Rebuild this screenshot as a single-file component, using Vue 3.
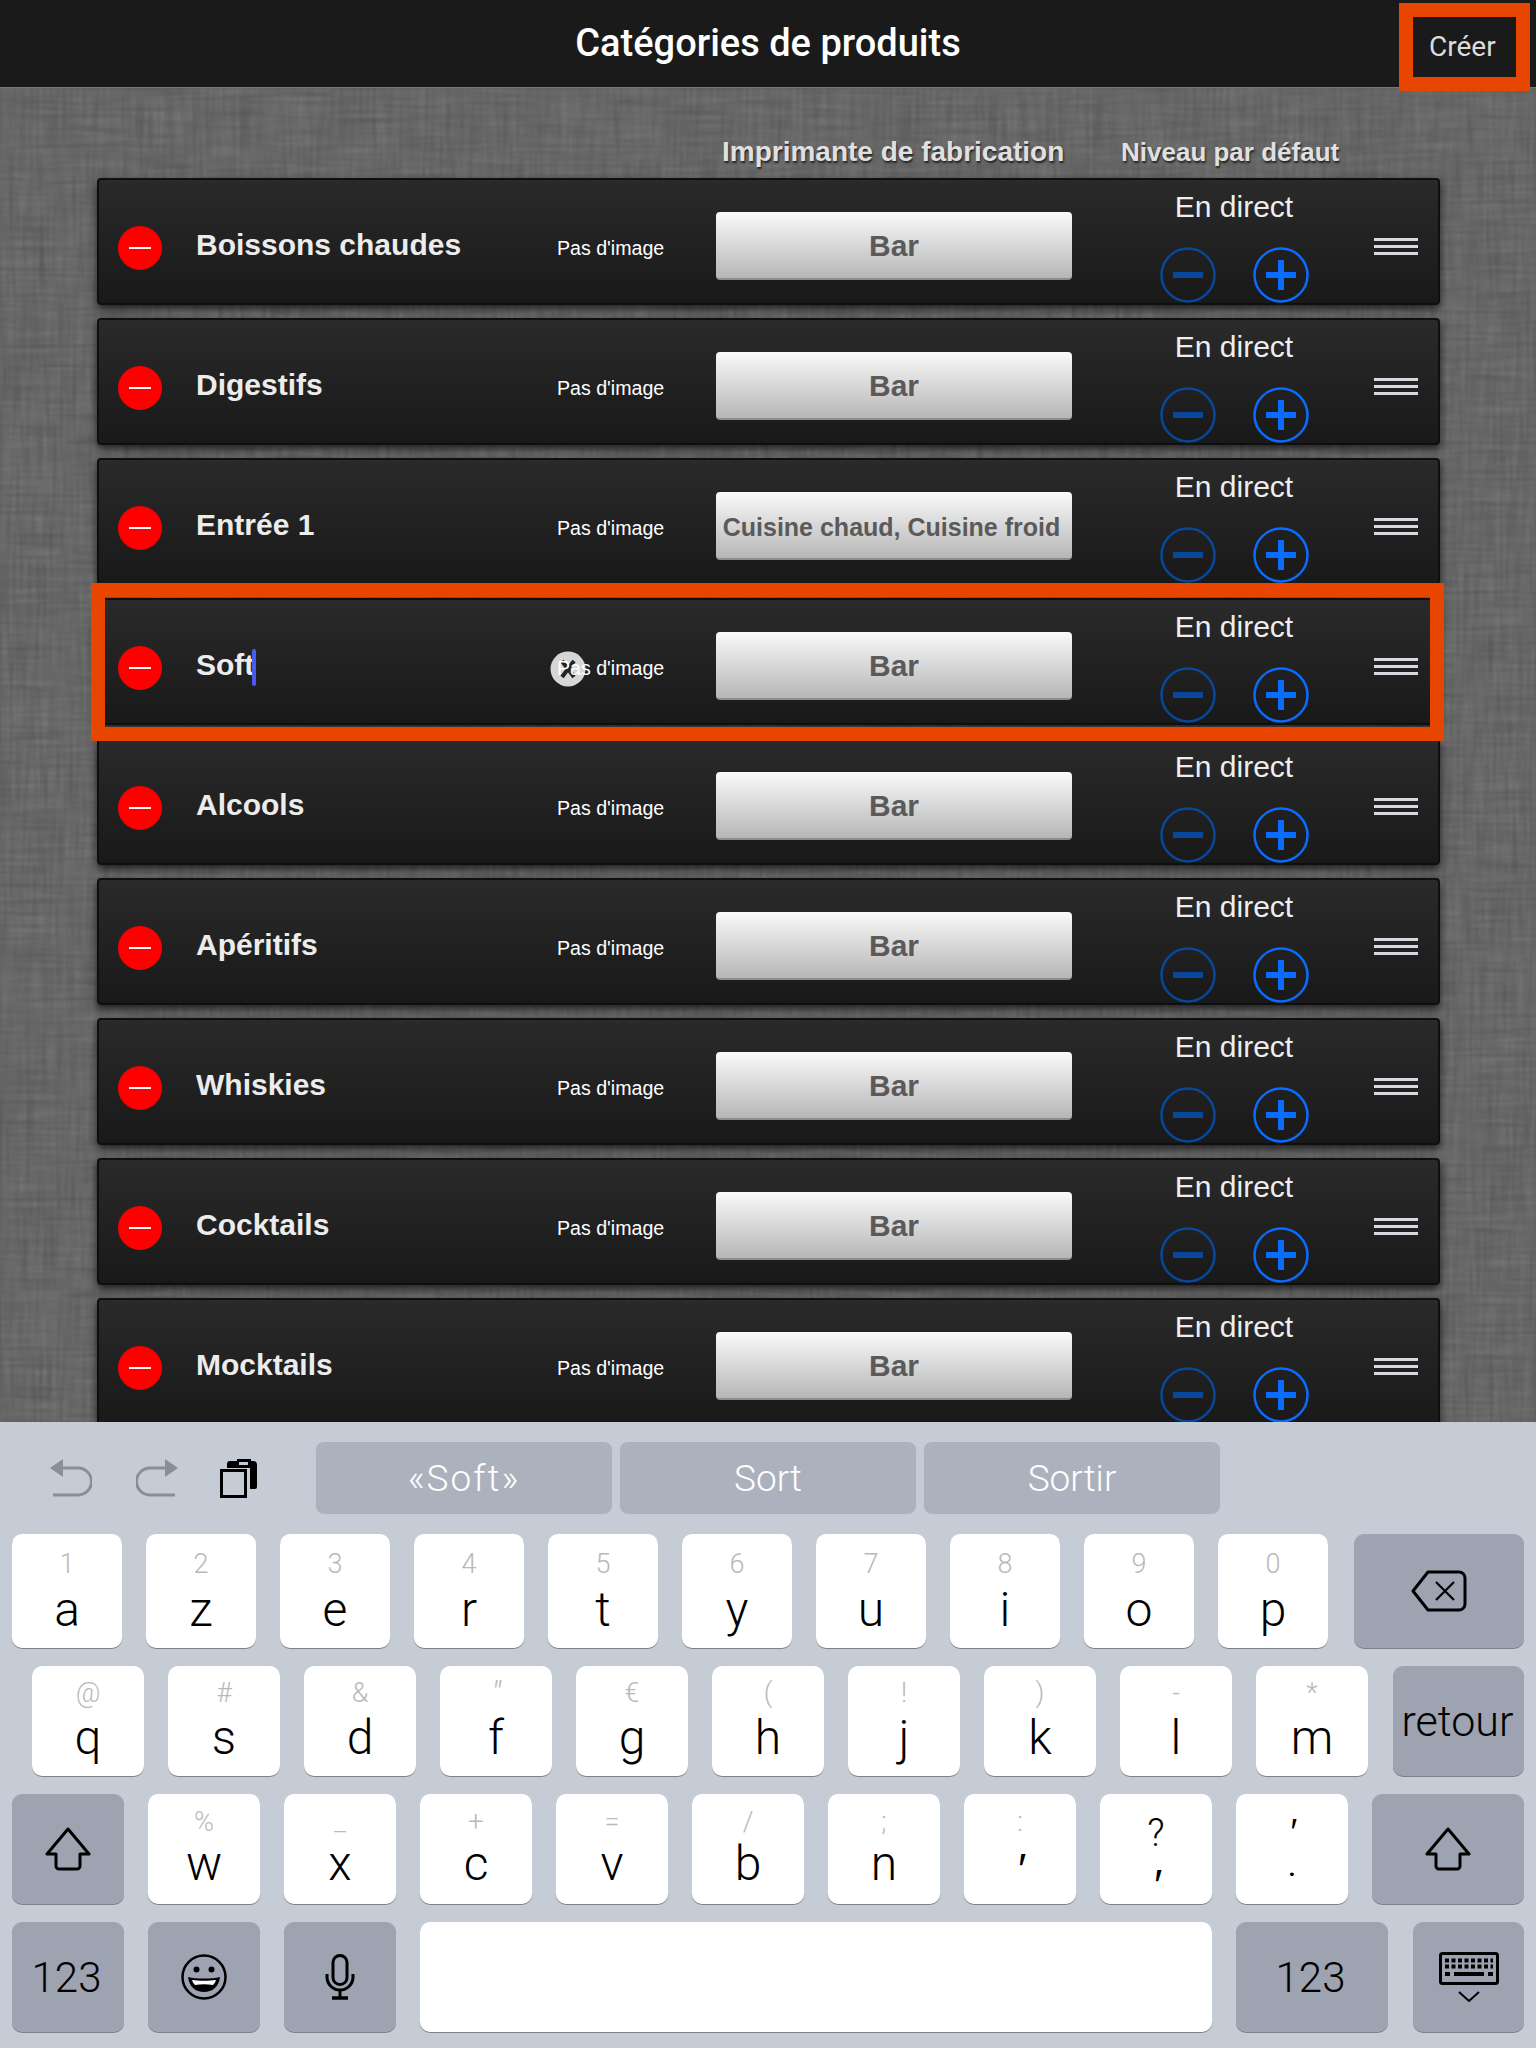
<script setup>
const rows = [
  { name: 'Boissons chaudes', printer: 'Bar' },
  { name: 'Digestifs', printer: 'Bar' },
  { name: 'Entrée 1', printer: 'Cuisine chaud, Cuisine froid', long: true },
  { name: 'Soft', printer: 'Bar', active: true },
  { name: 'Alcools', printer: 'Bar' },
  { name: 'Apéritifs', printer: 'Bar' },
  { name: 'Whiskies', printer: 'Bar' },
  { name: 'Cocktails', printer: 'Bar' },
  { name: 'Mocktails', printer: 'Bar' }
]
const row1 = [['1','a'],['2','z'],['3','e'],['4','r'],['5','t'],['6','y'],['7','u'],['8','i'],['9','o'],['0','p']]
const row2 = [['@','q'],['#','s'],['&','d'],['″','f'],['€','g'],['(','h'],['!','j'],[')','k'],['-','l'],['*','m']]
const row3 = [['%','w'],['_','x'],['+','c'],['=','v'],['/','b'],[';','n']]
</script>

<template>
  <div class="page">
    <header class="topbar">
      <h1 class="title">Catégories de produits</h1>
      <span class="create">Créer</span>
      <span class="create-mark"></span>
    </header>

    <main class="board">
      <svg class="linen" width="1536" height="1334" aria-hidden="true">
        <filter id="weave" x="0" y="0" width="100%" height="100%" color-interpolation-filters="sRGB">
          <feTurbulence type="fractalNoise" baseFrequency="0.015 0.3" numOctaves="3" seed="4" result="h" />
          <feTurbulence type="fractalNoise" baseFrequency="0.3 0.015" numOctaves="3" seed="9" result="v" />
          <feBlend in="h" in2="v" mode="multiply" />
          <feColorMatrix type="matrix" values="0.22 0 0 0 0.31  0.22 0 0 0 0.31  0.22 0 0 0 0.31  0 0 0 0 1" />
          <feGaussianBlur stdDeviation="0.8" />
        </filter>
        <rect width="1536" height="1334" filter="url(#weave)" />
      </svg>

      <div class="labels">
        <span class="label-printer">Imprimante de fabrication</span>
        <span class="label-level">Niveau par défaut</span>
      </div>

      <div class="list">
        <section v-for="row in rows" :key="row.name" class="row" :class="{ active: row.active }">
          <span class="remove"><i></i></span>
          <span class="name">{{ row.name }}<i v-if="row.active" class="caret"></i></span>
          <span class="noimg">
            <svg v-if="row.active" class="clear" width="36" height="36" viewBox="0 0 36 36">
              <circle cx="18" cy="18" r="17.5" fill="#d6d6d6" />
              <path d="M12 10 24 26M24 10 12 26" stroke="#222" stroke-width="4" />
            </svg>
            <span class="noimg-text">Pas d'image</span>
          </span>
          <span class="printer" :class="{ long: row.long }">{{ row.printer }}</span>
          <div class="level">
            <span class="level-name">En direct</span>
            <div class="steppers">
              <svg width="56" height="56" viewBox="0 0 56 56">
                <circle cx="28" cy="28" r="26.5" fill="none" stroke="#07479c" stroke-width="2.5" />
                <path d="M13 28h30" stroke="#07479c" stroke-width="6" />
              </svg>
              <svg width="56" height="56" viewBox="0 0 56 56">
                <circle cx="28" cy="28" r="26.5" fill="none" stroke="#0a6bff" stroke-width="2.5" />
                <path d="M13 28h30M28 13v30" stroke="#0a6bff" stroke-width="6" />
              </svg>
            </div>
          </div>
          <span class="grip"><i></i><i></i><i></i></span>
        </section>
      </div>
    </main>

    <div class="keyboard">
      <div class="tools">
        <div class="tool-icons">
          <svg width="42" height="38" viewBox="0 0 42 38">
            <path d="M0 9 13 0v18z" fill="#8a8f96" />
            <path d="M12 9h16a13.5 13.5 0 0 1 0 27H3" fill="none" stroke="#8a8f96" stroke-width="3" />
          </svg>
          <svg width="42" height="38" viewBox="0 0 42 38">
            <path d="M42 9 29 0v18z" fill="#8a8f96" />
            <path d="M30 9H14a13.5 13.5 0 0 0 0 27h25" fill="none" stroke="#8a8f96" stroke-width="3" />
          </svg>
          <svg width="37" height="40" viewBox="0 0 37 40">
            <path d="M7 10V6a3 3 0 0 1 3-3h7V1h14v2h2a4 4 0 0 1 4 4v22a2 2 0 0 1-2 2h-5V10z" fill="#000" />
            <rect x="18.5" y="3.5" width="10" height="4" fill="#c6ccd5" stroke="#000" stroke-width="1" />
            <rect x="1.5" y="12.5" width="24" height="26" fill="#c6ccd5" stroke="#000" stroke-width="3" />
          </svg>
        </div>
        <div class="suggestions">
          <span class="sugg quoted">«Soft»</span>
          <span class="sugg">Sort</span>
          <span class="sugg">Sortir</span>
        </div>
      </div>

      <div class="krow first">
        <span v-for="k in row1" :key="k[1]" class="key"><small>{{ k[0] }}</small><b>{{ k[1] }}</b></span>
        <span class="key dark del">
          <svg width="56" height="42" viewBox="0 0 56 42">
            <path d="M17 2h31a6 6 0 0 1 6 6v26a6 6 0 0 1-6 6H17L2 21z" fill="none" stroke="#000" stroke-width="3" stroke-linejoin="round" />
            <path d="M25 12l18 18M43 12 25 30" stroke="#000" stroke-width="2.2" />
          </svg>
        </span>
      </div>

      <div class="krow second">
        <span v-for="k in row2" :key="k[1]" class="key wide"><small :class="{ slant: k[1] === 'f' }">{{ k[0] }}</small><b>{{ k[1] }}</b></span>
        <span class="key dark ret">retour</span>
      </div>

      <div class="krow third">
        <span class="key dark wide">
          <svg width="46" height="44" viewBox="0 0 46 44">
            <path d="M23 2 44 27h-9v12a3 3 0 0 1-3 3H14a3 3 0 0 1-3-3V27H2z" fill="none" stroke="#000" stroke-width="3" stroke-linejoin="round" />
          </svg>
        </span>
        <span v-for="k in row3" :key="k[1]" class="key wide"><small>{{ k[0] }}</small><b>{{ k[1] }}</b></span>
        <span class="key wide"><small>:</small><em class="tick tick-comma">′</em></span>
        <span class="key wide stack"><em class="mark">?</em><em class="tick tick-low">′</em></span>
        <span class="key wide stack top-tick"><em class="tick tick-top">′</em><em class="dot">.</em></span>
        <span class="key dark shift-r">
          <svg width="46" height="44" viewBox="0 0 46 44">
            <path d="M23 2 44 27h-9v12a3 3 0 0 1-3 3H14a3 3 0 0 1-3-3V27H2z" fill="none" stroke="#000" stroke-width="3" stroke-linejoin="round" />
          </svg>
        </span>
      </div>

      <div class="krow">
        <span class="key dark wide num">123</span>
        <span class="key dark wide">
          <svg width="46" height="46" viewBox="0 0 46 46">
            <circle cx="23" cy="23" r="21.5" fill="none" stroke="#000" stroke-width="2.5" />
            <circle cx="15.5" cy="15.5" r="3" fill="#000" />
            <circle cx="30.5" cy="15.5" r="3" fill="#000" />
            <path d="M7 23c8 2 24 2 32 0-1 10-8 15-16 15S8 33 7 23z" fill="#000" />
            <path d="M11 26c7 1 17 1 24 0-1 3-2 4-3 5-6-1-12-1-18 0-1-1-2-2-3-5z" fill="#fff" />
          </svg>
        </span>
        <span class="key dark wide">
          <svg width="30" height="46" viewBox="0 0 30 46">
            <rect x="8" y="1.5" width="14" height="29" rx="7" fill="none" stroke="#000" stroke-width="3" />
            <path d="M2 20v3a13 13 0 0 0 26 0v-3M15 36v7" fill="none" stroke="#000" stroke-width="3" />
            <path d="M7 44h16" stroke="#000" stroke-width="3.5" />
          </svg>
        </span>
        <span class="key space"></span>
        <span class="key dark num num-r">123</span>
        <span class="key dark kbd">
          <svg width="60" height="50" viewBox="0 0 60 50">
            <rect x="1.5" y="1.5" width="57" height="30" rx="2" fill="none" stroke="#000" stroke-width="3" />
            <path d="M6 8.5h48M6 14.5h48" stroke="#000" stroke-width="4" stroke-dasharray="4 2.5" />
            <path d="M6 22h5M49 22h5M15 22h30" stroke="#000" stroke-width="4" />
            <path d="M20 40l10 9 10-9" fill="none" stroke="#000" stroke-width="2" />
          </svg>
        </span>
      </div>
    </div>
  </div>
</template>

<style>
html, body { margin: 0; background: #5d5d5d; }
</style>

<style scoped>
.page {
  width: 1536px;
  height: 2048px;
  overflow: hidden;
  display: flex;
  flex-direction: column;
  font-family: "Liberation Sans", Arial, sans-serif;
}
.topbar {
  position: relative;
  height: 87px;
  flex: none;
  background: #1a1a1a;
  border-bottom: 1px solid #777;
  display: flex;
  align-items: center;
  justify-content: center;
}
.title {
  margin: 0 0 1px;
  font: 500 38px "Roboto", sans-serif;
  color: #fff;
}
.create {
  position: absolute;
  left: 1429px;
  top: 25px;
  font: 400 28px/44px "Roboto", sans-serif;
  color: #dcdcdc;
}
.create-mark {
  position: absolute;
  left: 1399px;
  top: 3px;
  width: 103px;
  height: 60px;
  border: 14px solid #e84600;
  z-index: 3;
}
.board {
  position: relative;
  flex: none;
  height: 1334px;
  overflow: hidden;
  background: #5d5d5d;
}
.linen {
  position: absolute;
  left: 0;
  top: 0;
}
.labels {
  position: relative;
  height: 90px;
  font-weight: 700;
  font-size: 28px;
  color: #e0e0e0;
  text-shadow: 1px 2px 2px #222;
}
.label-printer { position: absolute; left: 722px; top: 48px; }
.label-level { position: absolute; left: 1121px; top: 49px; font-size: 26px; }
.list {
  position: relative;
  margin-left: 97px;
  width: 1343px;
  display: flex;
  flex-direction: column;
  gap: 13px;
}
.row {
  position: relative;
  flex: none;
  box-sizing: border-box;
  height: 127px;
  display: flex;
  align-items: center;
  background: linear-gradient(#2a2a2a, #191919);
  border: 2px solid #0f0f0f;
  border-radius: 4px;
  box-shadow: 0 4px 8px rgba(0, 0, 0, .7);
}
.row.active { z-index: 1; }
.row.active::after {
  content: "";
  position: absolute;
  left: -8px;
  top: -17px;
  right: -6px;
  bottom: -18px;
  border: 14px solid #e84600;
  pointer-events: none;
}
.remove {
  margin: 13px 0 0 19px;
  width: 44px;
  height: 44px;
  border-radius: 50%;
  background: #fe0000;
  display: flex;
  align-items: center;
  justify-content: center;
  flex: none;
}
.remove i { width: 22px; height: 2px; background: #fff; }
.name {
  margin: 7px 0 0 34px;
  width: 361px;
  flex: none;
  font-size: 30px;
  line-height: 36px;
  font-weight: 700;
  color: #ececec;
  white-space: nowrap;
}
.caret {
  display: inline-block;
  width: 4px;
  height: 37px;
  margin: -6px 0 -6px -2px;
  vertical-align: middle;
  background: #4a5cf0;
  border-radius: 2px;
}
.noimg {
  position: relative;
  margin-top: 13px;
  width: 159px;
  flex: none;
  font-size: 19.6px;
  color: #fff;
}
.noimg-text { position: relative; }
.clear { position: absolute; left: -7px; top: -6px; }
.printer {
  margin-top: 9px;
  width: 356px;
  height: 68px;
  flex: none;
  box-sizing: border-box;
  padding-top: 2px;
  border-radius: 4px;
  background: linear-gradient(#fafafa, #b6b6b6);
  border-bottom: 2px solid #8c8c8c;
  display: flex;
  align-items: center;
  justify-content: center;
  font-size: 30px;
  font-weight: 700;
  color: #5a5a5a;
  white-space: nowrap;
}
.printer.long { font-size: 25px; padding: 4px 5px 0 0; }
.level {
  box-sizing: border-box;
  align-self: stretch;
  padding-top: 10px;
  margin-left: 87px;
  width: 150px;
  flex: none;
  display: flex;
  flex-direction: column;
  align-items: center;
}
.level-name {
  font-size: 30px;
  line-height: 34px;
  color: #eee;
  white-space: nowrap;
}
.steppers {
  display: flex;
  gap: 37px;
  margin-top: 23px;
}
.steppers svg { display: block; }
.grip {
  margin: 10px 0 0 65px;
  width: 44px;
  flex: none;
  display: flex;
  flex-direction: column;
  gap: 4px;
}
.grip i { height: 3px; background: #d8d8e0; }

.keyboard {
  flex: none;
  height: 626px;
  background: #c6ccd5;
  position: relative;
  z-index: 2;
}
.tools {
  display: flex;
  align-items: center;
  height: 72px;
  padding-top: 20px;
  padding-left: 50px;
}
.tool-icons {
  width: 266px;
  flex: none;
  display: flex;
  gap: 44px;
  align-items: center;
}
.tool-icons svg:last-child { margin-left: -2px; }
.suggestions { display: flex; gap: 8px; }
.sugg {
  width: 296px;
  height: 72px;
  background: #abb2be;
  border-radius: 8px;
  display: flex;
  align-items: center;
  justify-content: center;
  font: 300 37px "Roboto", sans-serif;
  color: #fff;
}
.sugg.quoted { letter-spacing: 2px; }
.krow {
  display: flex;
  gap: 24px;
  padding-left: 12px;
  margin-top: 18px;
}
.krow.first { margin-top: 20px; }
.krow.second { padding-left: 32px; }
.key {
  width: 112px;
  height: 110px;
  flex: none;
  box-sizing: border-box;
  background: #fff;
  border-radius: 10px;
  box-shadow: 0 1px 0 #7d828c;
  display: flex;
  flex-direction: column;
  align-items: center;
  font-family: "Roboto", sans-serif;
  font-weight: 300;
  color: #000;
  padding-top: 12px;
}
.first .key { width: 110px; height: 114px; padding-top: 14px; }
.second .key { padding-top: 11px; }
.key small {
  font-size: 27px;
  line-height: 32px;
  color: #b9b9b9;
}
.key small.slant { font-style: italic; font-size: 34px; }
.key b {
  font-weight: 300;
  font-size: 48px;
  line-height: 52px;
}
.first .key b { margin-top: 4px; }
.second .key b { margin-top: 3px; }
.key.dark {
  background: #9da3b0;
  justify-content: center;
  padding-top: 0;
}
.first .key.del { width: 170px; margin-left: 2px; padding-top: 0; }
.key.ret { width: 131px; margin-left: 1px; padding-right: 2px; font-size: 43px; font-weight: 300; }
.key.shift-r { width: 152px; }
.key.num { font-size: 42px; padding-right: 3px; }
.key.num-r { width: 152px; }
.key.kbd { width: 111px; margin-left: 1px; }
.key.space { width: 792px; }
.key.stack { padding-top: 20px; }
.key.top-tick { padding-top: 21px; }
.key em { font-style: normal; }
.mark {
  font-size: 38px;
  line-height: 38px;
}
.key .dot {
  margin-top: 5px;
  font-size: 24px;
  font-weight: 700;
  line-height: 24px;
}
.key .tick {
  font: italic 400 44px/44px "Liberation Sans", sans-serif;
}
.tick-comma { margin-top: 10px; }
.tick-low { margin-top: 12px; }
.key .tick-top { font-size: 36px; line-height: 36px; }
</style>
